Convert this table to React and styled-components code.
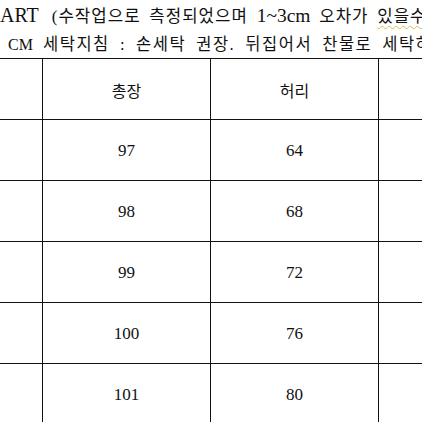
import React from 'react';
import styled, { createGlobalStyle } from 'styled-components';

const GlobalStyle = createGlobalStyle`
    html, body {
        margin: 0;
        padding: 0;
        background: #ffffff;
    }
    body {
        font-family: "Liberation Serif", "Noto Sans CJK KR", serif;
        color: #111111;
    }
`;

const Page = styled.div`
    width: 422px;
    height: 422px;
    overflow: hidden;
    background: #ffffff;
`;

const Notes = styled.div`
    height: 57.5px;
    display: flex;
    flex-direction: column;
`;

// the notes run past the right edge in the screenshot, so they are clipped
const NoteLine = styled.div`
    box-sizing: border-box;
    height: ${props => props.h}px;
    line-height: ${props => props.lh}px;
    padding-top: ${props => props.top || 0}px;
    padding-left: ${props => props.indent || 0}px;
    white-space: nowrap;
    overflow: hidden;
    font-size: ${props => props.size}px;
    letter-spacing: ${props => props.tracking}px;
    word-spacing: ${props => props.spacing}px;
`;

const Latin = styled.span`
    display: inline-block;
    font-size: ${props => props.size}px;
    letter-spacing: 0;
    margin-right: ${props => props.gap || 0}px;
`;

const Squiggle = styled.span`
    text-decoration: underline wavy #d8c050;
    text-decoration-thickness: 1px;
    text-underline-offset: 3px;
`;

const Grid = styled.div`
    display: grid;
    grid-template-columns: 43px 168px 168px 200px;
    grid-auto-rows: 61px;
    border-top: 1.5px solid #111111;
    width: 579px;
`;

const Cell = styled.div`
    box-sizing: border-box;
    display: flex;
    align-items: center;
    justify-content: center;
    border-right: ${props => (props.last ? 'none' : '1.5px solid #111111')};
    border-bottom: 1.5px solid #111111;
    font-size: ${props => (props.head ? '16px' : '17px')};
    padding-top: 2px;
`;

const rows = [
    ['총장', '허리'],
    ['97', '64'],
    ['98', '68'],
    ['99', '72'],
    ['100', '76'],
    ['101', '80'],
];

export default function App() {
    return (
        <Page>
            <GlobalStyle />
            <Notes>
                <NoteLine h={30} lh={30} size={16.8} tracking={1} spacing={3.5}>
                    <Latin size={20} gap={13}>ART</Latin>(수작업으로 측정되었으며 <Latin size={19.5}>1~3cm</Latin> 오차가 <Squiggle>있을수</Squiggle>
                </NoteLine>
                <NoteLine h={27.5} lh={24.5} top={3} indent={8} size={16.5} tracking={1.5} spacing={4.5}>
                    <Latin size={16}>CM</Latin> 세탁지침 : 손세탁 권장. 뒤집어서 찬물로 세탁하세요
                </NoteLine>
            </Notes>
            <Grid>
                {rows.map((row, i) => (
                    <React.Fragment key={i}>
                        <Cell />
                        <Cell head={i === 0}>{row[0]}</Cell>
                        <Cell head={i === 0}>{row[1]}</Cell>
                        <Cell last />
                    </React.Fragment>
                ))}
            </Grid>
        </Page>
    );
}
